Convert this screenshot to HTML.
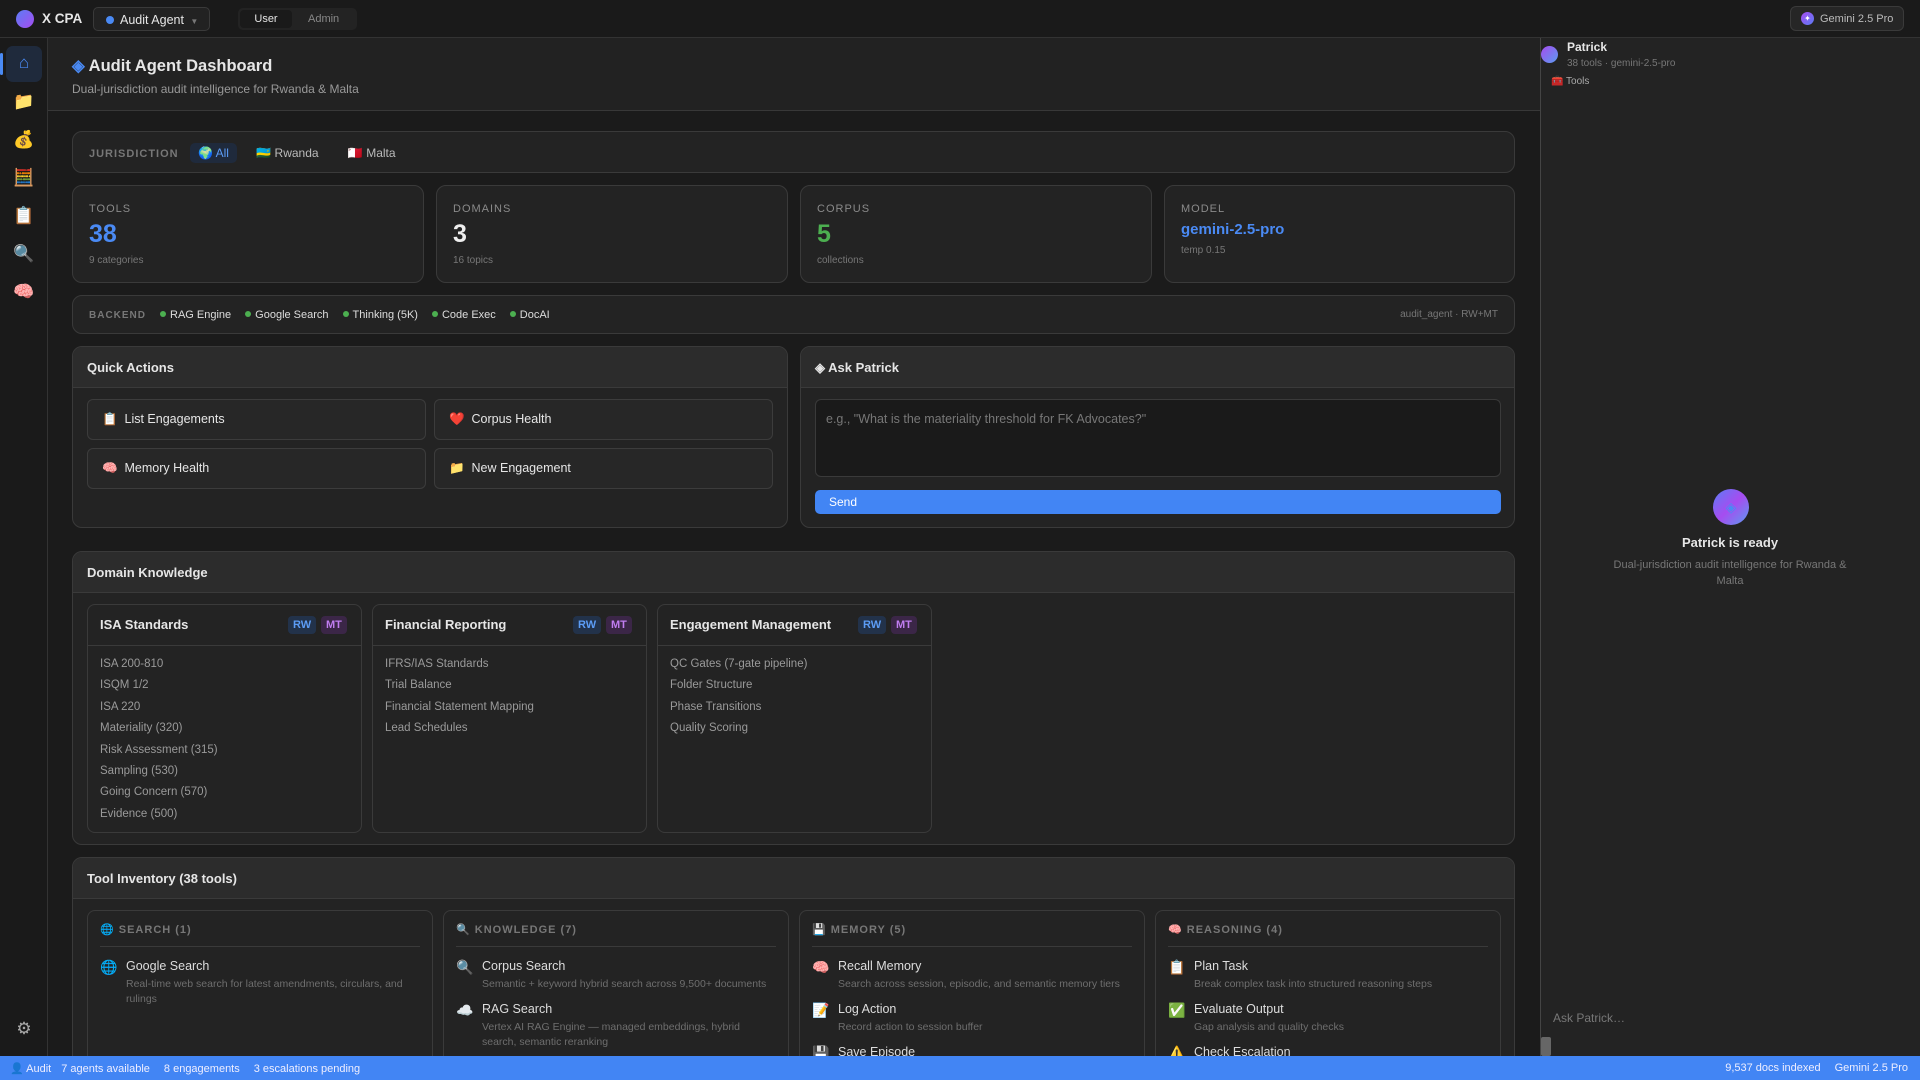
<!DOCTYPE html>
<html><head><meta charset="utf-8"><style>
*{box-sizing:border-box;margin:0;padding:0}
html,body{width:1920px;height:1080px;overflow:hidden}
body{background:#1b1b1b;font-family:"Liberation Sans","Noto Sans CJK SC",sans-serif;color:#e6e6e6;position:relative}
.a{position:absolute;white-space:nowrap}
.card{position:absolute;background:#232323;border:1px solid #3a3a3a;border-radius:10px;overflow:hidden}
.hd{height:41px;background:#2c2c2c;border-bottom:1px solid #3a3a3a;font-weight:bold;font-size:13px;padding:13px 14px}
.lbl{font-size:11px;color:#8a8a8a;letter-spacing:1px}
.sub{position:absolute;background:#232323;border:1px solid #3a3a3a;border-radius:8px;overflow:hidden}
.sub .h{height:41px;border-bottom:1px solid #3a3a3a;padding:12px 12px;font-weight:bold;font-size:13px;position:relative}
.tag{position:absolute;top:11px;font-size:11px;font-weight:bold;padding:3px 5px;border-radius:4px}
.rw{background:#22324a;color:#5c9cf5}.mt{background:#3b2647;color:#c07df0}
.sub ul{list-style:none;padding:8px 12px;font-size:11.5px;color:#9a9a9a;line-height:21.4px}
.qb{position:absolute;height:41px;background:#272727;border:1px solid #3c3c3c;border-radius:6px;font-size:12.5px;padding:12px 14px}
.col{position:absolute;top:910px;height:160px;width:346px;border:1px solid #3a3a3a;border-radius:8px;padding:12px 12px}
.ch{font-size:11px;font-weight:bold;color:#777;letter-spacing:1px;padding-bottom:10px;border-bottom:1px solid #3a3a3a;margin-bottom:12px}
.ti{display:flex;gap:10px;margin-bottom:10px}
.ti .ic{width:16px;font-size:14px}
.ti b{font-weight:normal;font-size:12.5px;color:#ddd;display:block;margin-bottom:4px}
.ti span{font-size:10.5px;color:#6e6e6e;line-height:15px;display:block}
.si{position:absolute;left:13px;width:22px;text-align:center;font-size:17px}
.dot{display:inline-block;width:6px;height:6px;border-radius:50%;background:#4caf50;margin:0 4px 1px 14px}
</style></head><body>
<!-- top bar -->
<div class="a" style="left:0;top:0;width:1920px;height:38px;background:#1a1a1a;border-bottom:1px solid #333"></div>
<div class="a" style="left:16px;top:10px;width:18px;height:18px;border-radius:50%;background:linear-gradient(135deg,#5b7cf5,#a64cf0)"></div>
<div class="a" style="left:42px;top:11px;font-size:13.5px;font-weight:bold">X CPA</div>
<div class="a" style="left:93px;top:7px;width:117px;height:24px;border:1px solid #3a3a3a;border-radius:5px;background:#222;font-size:12.5px;padding:5px 12px"><span style="display:inline-block;width:8px;height:8px;border-radius:50%;background:#4a8af4;margin-right:6px"></span>Audit Agent <span style="font-size:8px;color:#777;margin-left:3px">▼</span></div>
<div class="a" style="left:238px;top:8px;width:119px;height:22px;background:#232323;border-radius:5px"></div>
<div class="a" style="left:240px;top:10px;width:52px;height:18px;background:#1a1a1a;border-radius:4px;font-size:11px;text-align:center;padding-top:3px">User</div>
<div class="a" style="left:308px;top:13px;font-size:11px;color:#888">Admin</div>
<div class="a" style="left:1790px;top:6px;width:114px;height:25px;background:#262626;border:1px solid #3a3a3a;border-radius:6px;font-size:11px;color:#bbb;padding:6px 0 0 29px">Gemini 2.5 Pro</div>
<div class="a" style="left:1801px;top:12px;width:13px;height:13px;border-radius:50%;background:linear-gradient(135deg,#a64cf0,#5b7cf5);color:#fff;font-size:8px;text-align:center;line-height:13px">✦</div>
<!-- sidebar -->
<div class="a" style="left:0;top:38px;width:48px;height:1018px;background:#1a1a1a;border-right:1px solid #333"></div>
<div class="a" style="left:6px;top:46px;width:36px;height:36px;background:#1f2a3c;border-radius:7px"></div>
<div class="a" style="left:0;top:53px;width:3px;height:22px;background:#4a8af4;border-radius:2px"></div>
<div class="si" style="top:53px;color:#4a8af4">⌂</div>
<div class="si" style="top:92px">📁</div><div class="si" style="top:130px">💰</div><div class="si" style="top:168px">🧮</div><div class="si" style="top:206px">📋</div><div class="si" style="top:244px">🔍</div><div class="si" style="top:282px">🧠</div>
<div class="si" style="top:1019px;color:#aaa">⚙</div>
<!-- header -->
<div class="a" style="left:48px;top:38px;width:1492px;height:73px;background:#222;border-bottom:1px solid #383838"></div>
<div class="a" style="left:72px;top:56px;font-size:16.5px;font-weight:bold"><span style="color:#4a8af4">◈</span> Audit Agent Dashboard</div>
<div class="a" style="left:72px;top:82px;font-size:12px;color:#999">Dual-jurisdiction audit intelligence for Rwanda &amp; Malta</div>
<!-- jurisdiction -->
<div class="card" style="left:72px;top:131px;width:1443px;height:42px;padding:14px 16px;font-size:12px">
<span class="lbl" style="font-weight:bold;color:#777">JURISDICTION</span>
<span style="background:#1f2a3c;color:#5c9cf5;padding:3px 8px;border-radius:5px;margin-left:8px">🌍 All</span>
<span style="margin-left:16px;color:#bbb">🇷🇼 Rwanda</span>
<span style="margin-left:26px;color:#bbb">🇲🇹 Malta</span></div>
<!-- stats -->
<div class="card" style="left:72px;top:185px;width:352px;height:98px;padding:17px 16px"><div class="lbl">TOOLS</div><div style="font-size:25px;font-weight:bold;color:#4a8af4;margin:5px 0 6px">38</div><div style="font-size:10px;color:#777">9 categories</div></div>
<div class="card" style="left:436px;top:185px;width:352px;height:98px;padding:17px 16px"><div class="lbl">DOMAINS</div><div style="font-size:25px;font-weight:bold;color:#eee;margin:5px 0 6px">3</div><div style="font-size:10px;color:#777">16 topics</div></div>
<div class="card" style="left:800px;top:185px;width:352px;height:98px;padding:17px 16px"><div class="lbl">CORPUS</div><div style="font-size:25px;font-weight:bold;color:#4caf50;margin:5px 0 6px">5</div><div style="font-size:10px;color:#777">collections</div></div>
<div class="card" style="left:1164px;top:185px;width:351px;height:98px;padding:17px 16px"><div class="lbl">MODEL</div><div style="font-size:15px;font-weight:bold;color:#4a8af4;margin:6px 0 7px">gemini-2.5-pro</div><div style="font-size:10px;color:#777">temp 0.15</div></div>
<!-- backend -->
<div class="card" style="left:72px;top:295px;width:1443px;height:39px;padding:13px 16px;font-size:11px;color:#ddd">
<span class="lbl" style="font-weight:bold;font-size:10px;color:#777">BACKEND</span><span class="dot"></span>RAG Engine<span class="dot"></span>Google Search<span class="dot"></span>Thinking (5K)<span class="dot"></span>Code Exec<span class="dot"></span>DocAI
<span style="position:absolute;right:16px;top:13px;font-size:10px;color:#777">audit_agent · RW+MT</span></div>
<!-- quick actions -->
<div class="card" style="left:72px;top:346px;width:716px;height:182px"><div class="hd">Quick Actions</div></div>
<div class="qb" style="left:87px;top:399px;width:339px">📋&nbsp; List Engagements</div>
<div class="qb" style="left:434px;top:399px;width:339px">❤️&nbsp; Corpus Health</div>
<div class="qb" style="left:87px;top:448px;width:339px">🧠&nbsp; Memory Health</div>
<div class="qb" style="left:434px;top:448px;width:339px">📁&nbsp; New Engagement</div>
<!-- ask patrick -->
<div class="card" style="left:800px;top:346px;width:715px;height:182px"><div class="hd">◈ Ask Patrick</div></div>
<div class="a" style="left:815px;top:399px;width:686px;height:78px;background:#1a1a1a;border:1px solid #3a3a3a;border-radius:6px;font-size:12.5px;color:#777;padding:12px 10px">e.g., "What is the materiality threshold for FK Advocates?"</div>
<div class="a" style="left:815px;top:490px;width:686px;height:24px;background:#4285f4;border-radius:5px;font-size:12px;color:#fff;padding:5px 14px">Send</div>
<!-- domain -->
<div class="card" style="left:72px;top:551px;width:1443px;height:294px"><div class="hd">Domain Knowledge</div></div>
<div class="sub" style="left:87px;top:604px;width:275px;height:229px"><div class="h">ISA Standards<span class="tag rw" style="left:200px">RW</span><span class="tag mt" style="left:233px">MT</span></div><ul><li>ISA 200-810</li><li>ISQM 1/2</li><li>ISA 220</li><li>Materiality (320)</li><li>Risk Assessment (315)</li><li>Sampling (530)</li><li>Going Concern (570)</li><li>Evidence (500)</li></ul></div>
<div class="sub" style="left:372px;top:604px;width:275px;height:229px"><div class="h">Financial Reporting<span class="tag rw" style="left:200px">RW</span><span class="tag mt" style="left:233px">MT</span></div><ul><li>IFRS/IAS Standards</li><li>Trial Balance</li><li>Financial Statement Mapping</li><li>Lead Schedules</li></ul></div>
<div class="sub" style="left:657px;top:604px;width:275px;height:229px"><div class="h">Engagement Management<span class="tag rw" style="left:200px">RW</span><span class="tag mt" style="left:233px">MT</span></div><ul><li>QC Gates (7-gate pipeline)</li><li>Folder Structure</li><li>Phase Transitions</li><li>Quality Scoring</li></ul></div>
<!-- tool inventory -->
<div class="card" style="left:72px;top:857px;width:1443px;height:220px"><div class="hd">Tool Inventory (38 tools)</div></div>
<div class="col" style="left:87px"><div class="ch">🌐 SEARCH (1)</div>
<div class="ti"><div class="ic">🌐</div><div><b>Google Search</b><span style="white-space:normal">Real-time web search for latest amendments, circulars, and rulings</span></div></div></div>
<div class="col" style="left:443px"><div class="ch">🔍 KNOWLEDGE (7)</div>
<div class="ti"><div class="ic">🔍</div><div><b>Corpus Search</b><span>Semantic + keyword hybrid search across 9,500+ documents</span></div></div>
<div class="ti"><div class="ic">☁️</div><div><b>RAG Search</b><span>Vertex AI RAG Engine — managed embeddings, hybrid search, semantic reranking</span></div></div></div>
<div class="col" style="left:799px"><div class="ch">💾 MEMORY (5)</div>
<div class="ti"><div class="ic">🧠</div><div><b>Recall Memory</b><span>Search across session, episodic, and semantic memory tiers</span></div></div>
<div class="ti"><div class="ic">📝</div><div><b>Log Action</b><span>Record action to session buffer</span></div></div>
<div class="ti"><div class="ic">💾</div><div><b>Save Episode</b></div></div></div>
<div class="col" style="left:1155px"><div class="ch">🧠 REASONING (4)</div>
<div class="ti"><div class="ic">📋</div><div><b>Plan Task</b><span>Break complex task into structured reasoning steps</span></div></div>
<div class="ti"><div class="ic">✅</div><div><b>Evaluate Output</b><span>Gap analysis and quality checks</span></div></div>
<div class="ti"><div class="ic">⚠️</div><div><b>Check Escalation</b></div></div></div>
<!-- right panel -->
<div class="a" style="left:1540px;top:38px;width:380px;height:1018px;background:#232323"></div>
<div class="a" style="left:1540px;top:38px;width:1px;height:1018px;background:#444"></div>
<div class="a" style="left:1541px;top:46px;width:17px;height:17px;border-radius:50%;background:linear-gradient(135deg,#a64cf0,#5b9cf0)"></div>
<div class="a" style="left:1567px;top:40px;font-size:12px;font-weight:bold">Patrick</div>
<div class="a" style="left:1567px;top:58px;font-size:10px;color:#777">38 tools · gemini-2.5-pro</div>
<div class="a" style="left:1551px;top:76px;font-size:10px;color:#aaa">🧰 Tools</div>
<div class="a" style="left:1713px;top:489px;width:36px;height:36px;border-radius:50%;background:linear-gradient(135deg,#5b7cf5,#a64cf0 50%,#5b9cf0);color:#4a8af4;text-align:center;line-height:36px;font-size:14px">◈</div>
<div class="a" style="left:1540px;top:535px;width:380px;text-align:center;font-size:13px;font-weight:bold">Patrick is ready</div>
<div class="a" style="left:1605px;top:557px;width:250px;text-align:center;font-size:11px;color:#777;line-height:16px;white-space:normal">Dual-jurisdiction audit intelligence for Rwanda &amp; Malta</div>
<div class="a" style="left:1553px;top:1011px;font-size:12px;color:#777">Ask Patrick…</div>
<div class="a" style="left:1541px;top:1037px;width:10px;height:19px;background:#666;border-radius:2px"></div>
<!-- status bar -->
<div class="a" style="left:0;top:1056px;width:1920px;height:24px;background:#4285f4;font-size:11px;color:#eef;padding:6px 10px">
<span>👤 Audit</span><span style="margin-left:10px">7 agents available</span><span style="margin-left:14px">8 engagements</span><span style="margin-left:14px">3 escalations pending</span>
<span style="position:absolute;right:12px;top:6px">9,537 docs indexed<span style="margin-left:14px">Gemini 2.5 Pro</span></span></div>
</body></html>
